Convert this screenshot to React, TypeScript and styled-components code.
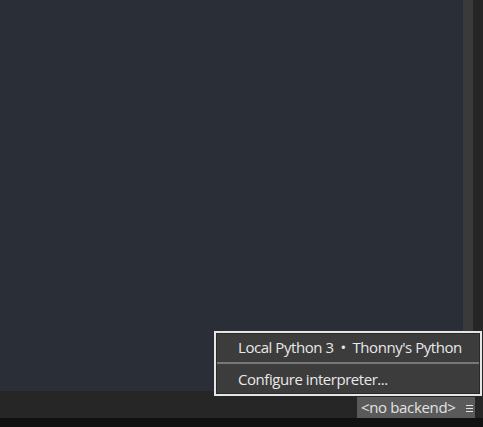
import React from "react";
import styled, { createGlobalStyle } from "styled-components";

const Global = createGlobalStyle`
  html, body { margin: 0; padding: 0; background: #111111; }
  body { font-family: "Open Sans", "Noto Sans", sans-serif; }
`;

const Window = styled.div`
  position: relative;
  width: 483px;
  height: 427px;
  display: flex;
  flex-direction: column;
  overflow: hidden;
  background: #111111;
`;

const Main = styled.div`
  height: 391px;
  display: flex;
`;

const Editor = styled.div`
  flex: 1;
  background: #2a2e37;
`;

const ScrollTrack = styled.div`
  width: 10px;
  background: #3a3a3a;
`;

const Gutter = styled.div`
  width: 10px;
  background: #262626;
`;

const StatusBar = styled.div`
  height: 27px;
  background: #262626;
  display: flex;
  align-items: flex-end;
  justify-content: flex-end;
  padding-right: 8px;
`;

const BackendButton = styled.div`
  height: 21px;
  width: 118px;
  box-sizing: border-box;
  background: #5a5a5a;
  color: #e2e2e2;
  font-size: 15px;
  letter-spacing: -0.35px;
  line-height: 21px;
  display: flex;
  align-items: center;
  padding-left: 4px;
  gap: 11px;
  white-space: nowrap;
`;

const Hamburger = styled.span`
  display: flex;
  flex-direction: column;
  gap: 2px;
  width: 7px;
  margin-top: 1px;
  & > i {
    display: block;
    height: 1px;
    background: #e2e2e2;
  }
`;

const BottomStrip = styled.div`
  height: 9px;
  background: #111111;
`;

const Menu = styled.div`
  position: absolute;
  left: 214px;
  top: 331px;
  width: 268px;
  box-sizing: border-box;
  border: 2px solid #e6e6e6;
  background: #3c3c3c;
  box-shadow: inset 0 0 0 1px #2a2a2a;
  padding: 1px 0;
`;

const MenuItem = styled.div<{ $h: number; $pb: number }>`
  height: ${(p) => p.$h}px;
  box-sizing: border-box;
  padding-bottom: ${(p) => p.$pb}px;
  display: flex;
  align-items: center;
  padding-left: 22px;
  color: #e8e8e8;
  font-size: 15px;
  letter-spacing: -0.45px;
  white-space: nowrap;
`;

const Separator = styled.div`
  height: 2px;
  margin: 0 1px;
  background: #777777;
`;

export default function App() {
  return (
    <>
      <Global />
      <Window>
        <Main>
          <Editor />
          <ScrollTrack />
          <Gutter />
        </Main>
        <StatusBar>
          <BackendButton>
            <span>&lt;no backend&gt;</span>
            <Hamburger>
              <i />
              <i />
              <i />
            </Hamburger>
          </BackendButton>
        </StatusBar>
        <BottomStrip />
        <Menu>
          <MenuItem $h={28} $pb={3}>
            Local Python 3&nbsp;&nbsp;•&nbsp;&nbsp;Thonny's Python
          </MenuItem>
          <Separator />
          <MenuItem $h={29} $pb={0}>
            Configure interpreter...
          </MenuItem>
        </Menu>
      </Window>
    </>
  );
}
